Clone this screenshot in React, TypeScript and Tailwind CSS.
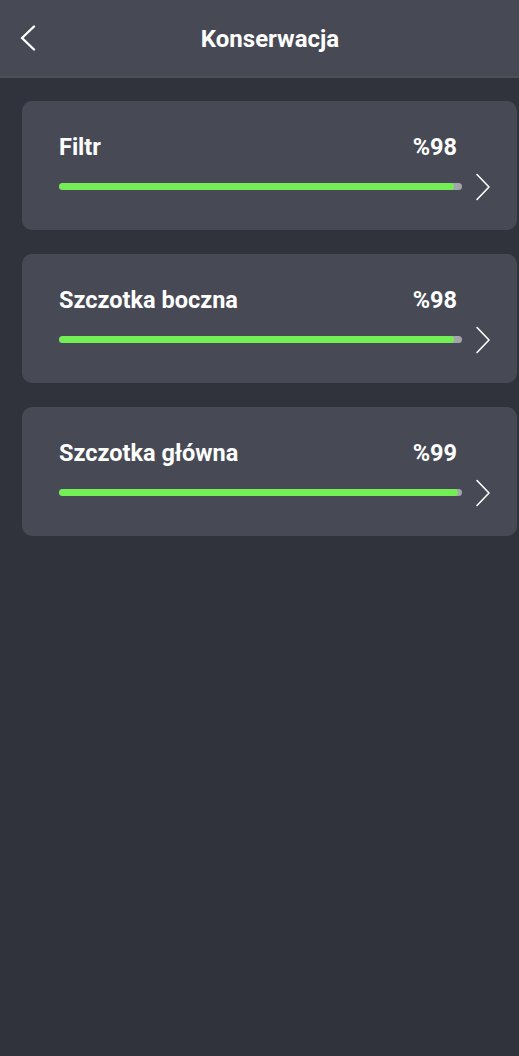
import React from "react";

const items = [
  { name: "Filtr", pct: 98 },
  { name: "Szczotka boczna", pct: 98 },
  { name: "Szczotka główna", pct: 99 },
];

function Chevron({ dir }: { dir: "left" | "right" }) {
  return (
    <svg width="16" height="28" viewBox="0 0 16 28" fill="none">
      {dir === "right" ? (
        <path d="M2 1.5 L14 14 L2 26.5" stroke="#ffffff" strokeWidth="1.6" strokeLinecap="round" strokeLinejoin="round" />
      ) : (
        <path d="M14 1.5 L2 13 L14 24.5" stroke="#ffffff" strokeWidth="2.4" strokeLinecap="round" strokeLinejoin="round" />
      )}
    </svg>
  );
}

export default function App() {
  return (
    <div className="min-h-[1056px] w-[519px] bg-[#30333b] font-['Roboto',sans-serif] text-white">
      <header className="relative flex h-[78px] items-center justify-center border-b-2 border-[#4c4f58] bg-[#474a54] pl-[21px]">
        <div className="absolute left-[20px] top-[25px]">
          <Chevron dir="left" />
        </div>
        <h1 className="pt-[2px] text-[24px] font-bold leading-none">Konserwacja</h1>
      </header>
      <div className="flex flex-col gap-[24px] pl-[22px] pr-[2px] pt-[23px]">
        {items.map((it) => (
          <div key={it.name} className="flex h-[129px] items-start rounded-[10px] bg-[#474a54] pl-[37px] pt-[32px]">
            <div className="flex w-[403px] flex-col">
              <div className="flex items-center justify-between pr-[5px] text-[23.5px] font-bold leading-[28px]">
                <span>{it.name}</span>
                <span>%{it.pct}</span>
              </div>
              <div className="mt-[22px] h-[7px] w-full overflow-hidden rounded-full bg-[#a3a5aa]">
                <div className="h-full rounded-full bg-[#73ee54]" style={{ width: `${it.pct}%` }} />
              </div>
            </div>
            <div className="ml-[13px] mt-[40px]">
              <Chevron dir="right" />
            </div>
          </div>
        ))}
      </div>
    </div>
  );
}
